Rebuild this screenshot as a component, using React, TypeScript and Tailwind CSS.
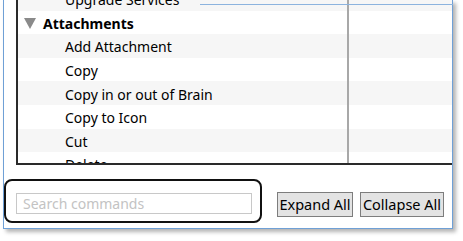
import React from 'react';

const rows: { label: string; bold?: boolean; group?: boolean }[] = [
  { label: 'Upgrade Services' },
  { label: 'Attachments', bold: true, group: true },
  { label: 'Add Attachment' },
  { label: 'Copy' },
  { label: 'Copy in or out of Brain' },
  { label: 'Copy to Icon' },
  { label: 'Cut' },
  { label: 'Delete' },
];

function Caret() {
  return (
    <svg width="12" height="11" viewBox="0 0 12 11" className="shrink-0">
      <path d="M0 0 H12 L6 11 Z" fill="#8a8a8a" />
    </svg>
  );
}

export default function App() {
  return (
    <div
      className="relative w-[463px] h-[241px] bg-white overflow-hidden text-black"
      style={{ fontFamily: '"Noto Sans", "Open Sans", sans-serif' }}
    >
      <div className="ml-[3px] w-[450px] h-[229px] bg-white border-x border-b border-[#6fa0d6] shadow-[3px_3px_4px_rgba(0,0,0,0.3)] flex flex-col">
        {/* command grid */}
        <div className="ml-[12px] h-[165px] shrink-0 border-l-2 border-b-2 border-[#2a2a2a] overflow-hidden flex">
          <div className="flex-1 flex flex-col -mt-[13px]">
            {rows.map((r, i) => (
              <div
                key={r.label}
                className={`h-[23.6px] shrink-0 flex items-center text-[14px] leading-none ${
                  i % 2 === 0 ? 'bg-[#f6f6f6]' : 'bg-white'
                }`}
              >
                <div className="w-[331px] flex items-center border-r-2 border-[#a8a8a8] h-full pt-[3px]">
                  {r.group ? (
                    <div className="flex items-center pl-[6px] gap-[7px]">
                      <Caret />
                      <span className="font-bold">{r.label}</span>
                    </div>
                  ) : (
                    <span className="pl-[47px]">{r.label}</span>
                  )}
                </div>
                <div className="flex-1 h-full" />
              </div>
            ))}
          </div>
        </div>

        {/* bottom bar */}
        <div className="flex items-start flex-1 pl-[12px] pr-[7px] pt-[27px]">
          <input
            placeholder="Search commands"
            className="mt-[1px] w-[236px] h-[21px] border border-[#c8c8c8] px-[6px] text-[14px] placeholder:text-[#c3c3c3] outline-none"
          />
          <button className="ml-[25px] w-[76px] h-[25px] bg-[#e3e3e3] border border-[#7d7d7d] text-[14.5px] leading-none">
            Expand All
          </button>
          <button className="ml-[7px] w-[84px] h-[25px] bg-[#e3e3e3] border border-[#7d7d7d] text-[14.5px] leading-none">
            Collapse All
          </button>
        </div>
      </div>

      {/* top edge line of window crop */}
      <div className="absolute top-[4px] left-[200px] w-[253px] h-px bg-[#8cb3de]" />

      {/* highlight annotation */}
      <div className="absolute left-[4px] top-[179px] w-[258px] h-[44px] rounded-[8px] border-2 border-[#111]" />
    </div>
  );
}
